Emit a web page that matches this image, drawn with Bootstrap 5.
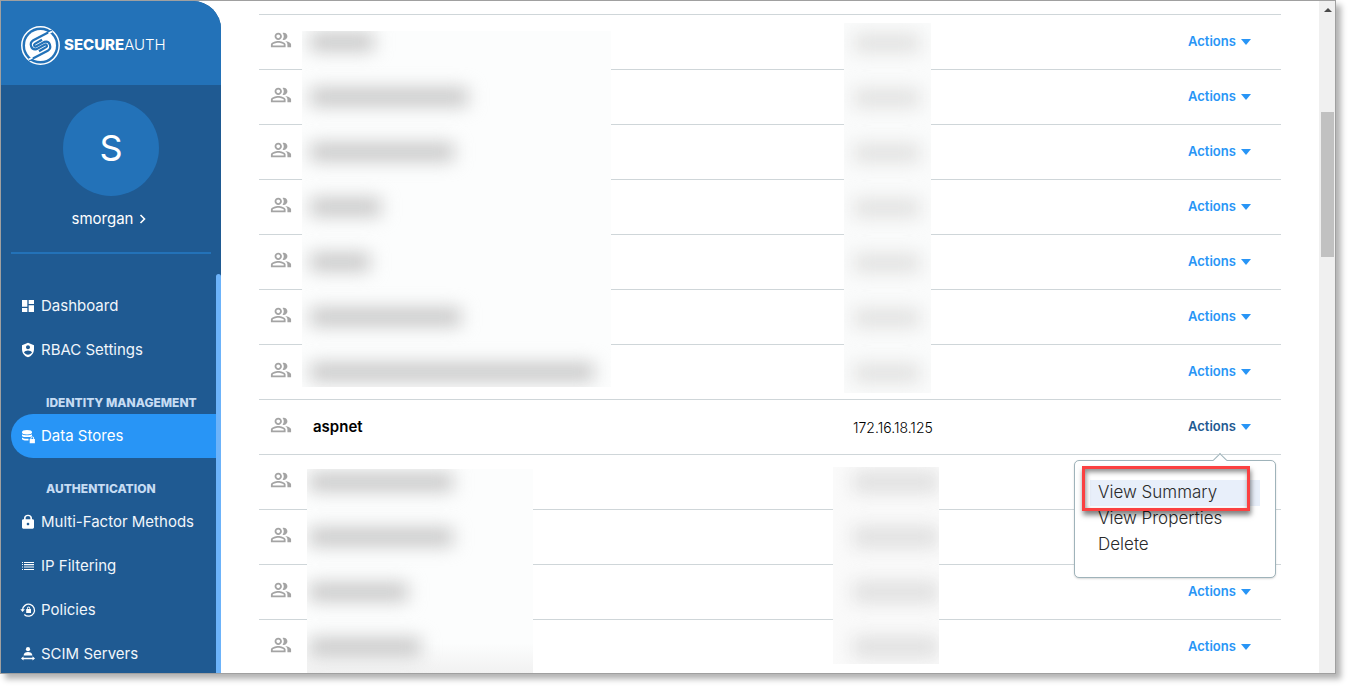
<!DOCTYPE html>
<html lang="en">
<head>
<meta charset="utf-8">
<meta name="viewport" content="width=device-width, initial-scale=1">
<title>SecureAuth - Data Stores</title>
<link href="https://cdn.jsdelivr.net/npm/bootstrap@5.3.0/dist/css/bootstrap.min.css" rel="stylesheet">
<style>
  :root {
    --sa-brand: #2372b8;
    --sa-deep: #1f5a92;
    --sa-bright: #2895f6;
    --sa-line: #cfd6d9;
  }
  body {
    font-family: Inter, "Open Sans", sans-serif;
    background: #fff;
    color: #000;
    padding: 0 15px 15px 0;
    overflow: hidden;
  }
  a { text-decoration: none; }
  .app-window {
    height: calc(100vh - 15px);
    border: 1px solid #a0a0a0;
    box-shadow: 5px 5px 6px rgba(0, 0, 0, .3);
    background: #fff;
  }

  /* Sidebar */
  .side { width: 220px; background: var(--sa-deep); border-top-right-radius: 28px; overflow: hidden; }
  .side-brand { height: 84px; padding: 4px 0 0 20px; gap: 4px; background: var(--sa-brand); }
  .wordmark { font-size: 15px; line-height: 20px; color: #fff; }
  .wordmark b { font-weight: 800; }
  .wordmark span { font-weight: 300; }
  .avatar { width: 96px; height: 96px; margin-top: 15px; background: var(--sa-brand); color: #fff; font-size: 36px; }
  .user-link { font-size: 15px; line-height: 20px; margin-top: 13px; padding-right: 4px; gap: 6px; color: #fff; }
  .side-rule { height: 2px; margin: 23px 10px 20px; background: var(--sa-brand); }
  .side-scroll { width: 5px; background: #6cb3fa; border-radius: 3px 3px 0 0; }
  .side-menu { padding: 10px 0 0 10px; }
  .side-link { height: 44px; padding-left: 9px; gap: 5px; font-size: 15px; color: #f1f6fb; border-radius: 22px 0 0 22px; }
  .side-link svg { width: 16px; height: 16px; fill: #fff; flex: none; }
  .side-link.active { background: var(--sa-bright); color: #fff; }
  .side-head { height: 42px; padding: 19px 0 0 35px; margin: 0; font-size: 12px; line-height: 24px; font-weight: 800; color: #c6dcf3; white-space: nowrap; }

  /* Data store list */
  .list-area { padding: 13px 38px 0; overflow: hidden; }
  .stores { table-layout: fixed; width: 100%; margin: 0; }
  .stores td { height: 55px; padding: 0; border-top: 1px solid var(--sa-line); vertical-align: middle; }
  .stores .c-icon { width: 54px; }
  .stores .c-addr { width: 335px; }
  .stores .c-act { width: 93px; }
  .stores svg { display: block; width: 22px; height: 22px; margin: 0 0 4px 11px; fill: #a4a4a4; }
  .store-name { font-size: 15px; font-weight: 600; }
  .store-addr { font-size: 14px; font-weight: 300; }
  .act-btn { font-size: 13px; line-height: 20px; font-weight: 600; padding: 0 0 2px; border: 0; color: var(--sa-bright); gap: 5px; background: none; display: flex; align-items: center; }
  .act-btn::after { margin: 1px 0 0; border-top: 6px solid var(--sa-bright); border-left: 5px solid transparent; border-right: 5px solid transparent; }
  .act-btn.show { color: var(--sa-deep) !important; }

  /* Open row menu */
  .row-menu { top: 60px; right: 5px; width: 202px; padding: 19px 15px; border: 1px solid #9fb3ba; border-radius: 5px; box-shadow: 0 1px 2px rgba(0, 0, 0, .15); z-index: 5; }
  .row-menu::before { content: ""; position: absolute; top: -6px; left: 140px; width: 10px; height: 10px; background: #fff; border: solid #9fb3ba; border-width: 1px 0 0 1px; transform: rotate(45deg); }
  .row-menu .dropdown-item { height: 26px; padding: 0 8px; font-size: 17px; line-height: 24px; font-weight: 300; color: #2a2a2a; }
  .row-menu .dropdown-item.current { background: #e8effa; }
  .callout { position: absolute; top: 5px; left: 7px; width: 168px; height: 45px; border: 3px solid #fb4141; box-shadow: 1px 4px 5px rgba(0, 0, 0, .5), inset 1px 3px 5px rgba(0, 0, 0, .45); pointer-events: none; }

  /* Redacted columns */
  .redact { position: absolute; overflow: hidden; background: #fcfdfd; }
  .redact div { height: 55px; display: flex; align-items: center; }
  .redact i { display: block; height: 18px; background: #c6c6c6; filter: blur(9px); }
  .redact-name-a { top: 30px; left: 81px; width: 309px; height: 356px; padding-left: 8px; }
  .redact-name-a div:first-child { margin-top: -17px; }
  .redact-name-b { top: 468px; bottom: -1px; left: 86px; width: 226px; padding-left: 2px; background: linear-gradient(#fcfdfd 85%, #f1f1f1); }
  .redact-name-b div:first-child { margin-top: -15px; }
  .redact-addr-a { top: 22px; right: 388px; width: 87px; height: 370px; padding-left: 10px; background: #fafbfb; }
  .redact-addr-a div:first-child { margin-top: -8px; }
  .redact-addr-b { top: 466px; right: 380px; width: 106px; height: 197px; padding-left: 20px; background: #fafafa; }
  .redact-addr-b div:first-child { margin-top: -13px; }
  .redact-addr-a i { width: 66px; background: #e0e0df; }
  .redact-addr-b i { width: 88px; height: 22px; background: #e0e0e0; }

  /* Page scroll bar */
  .page-scroll { width: 16px; background: #f0f0f0; padding: 7px 1px 0 2px; }
  .page-scroll .arrow { width: 8px; height: 4px; margin-left: 3px; background: #4a4a4a; clip-path: polygon(50% 0, 100% 100%, 0 100%); }
  .page-scroll .thumb { height: 145px; margin-top: 100px; background: #c1c1c1; }
</style>
</head>
<body>
<svg class="d-none" aria-hidden="true">
  <symbol id="group" viewBox="0 0 24 24">
    <path d="M16.67 13.13C18.04 14.06 19 15.32 19 17v3h4v-3c0-2.18-3.57-3.47-6.33-3.87zM15 12c2.21 0 4-1.79 4-4s-1.79-4-4-4c-.47 0-.91.1-1.33.24C14.5 5.27 15 6.58 15 8s-.5 2.73-1.33 3.76c.42.14.86.24 1.33.24zM9 12c2.21 0 4-1.79 4-4s-1.79-4-4-4-4 1.79-4 4 1.79 4 4 4zm0-6c1.1 0 2 .9 2 2s-.9 2-2 2-2-.9-2-2 .9-2 2-2zm0 7c-2.67 0-8 1.34-8 4v3h16v-3c0-2.66-5.33-4-8-4zm6 5H3v-.99C3.2 16.29 6.3 15 9 15s5.8 1.29 6 2v1z"/>
  </symbol>
</svg>

<div class="app-window d-flex">
  <aside class="side d-flex flex-column flex-shrink-0">
    <div class="side-brand d-flex align-items-center flex-shrink-0">
      <svg width="39" height="39" viewBox="0 0 39 39" fill="none" aria-hidden="true">
        <circle cx="19.500" cy="19.500" r="18.700" stroke="#fff" stroke-width="1.500"/>
        <circle cx="19.500" cy="19.500" r="15.500" fill="#fff"/>
        <g stroke="#2372b8" stroke-width="2.200">
          <path d="M31 4.500 12.300 14.200c-4.500 2.800-2.600 10.200 3.200 8.900L24 18.600c2-.6 2.600 1.600 1.200 2.500L18 25.200"/>
          <path d="M8 34.500 26.700 24.800c4.500-2.800 2.600-10.200-3.200-8.900L15 20.400c-2 .6-2.600-1.600-1.200-2.500L21 13.800"/>
        </g>
        <path d="m27.500 7.500 3.500-2M11.500 31.500l-3.500 2" stroke="#fff" stroke-width="2"/>
      </svg>
      <div class="wordmark"><b>SECURE</b><span>AUTH</span></div>
    </div>

    <div class="d-flex flex-column align-items-center flex-shrink-0">
      <div class="avatar rounded-circle d-flex align-items-center justify-content-center">S</div>
      <a href="#" class="user-link d-flex align-items-center">smorgan
        <svg width="7" height="10" viewBox="0 0 7 10" fill="none" stroke="#fff" stroke-width="1.600" aria-hidden="true"><path d="m1.500 1 4 4-4 4"/></svg>
      </a>
    </div>
    <div class="side-rule flex-shrink-0"></div>

    <div class="d-flex flex-grow-1 overflow-hidden">
      <nav class="side-menu flex-grow-1">
        <a href="#" class="side-link d-flex align-items-center">
          <svg viewBox="0 0 24 24" aria-hidden="true"><path d="M3 13h8V3H3v10zm0 8h8v-6H3v6zm10 0h8V11h-8v10zm0-18v6h8V3h-8z"/></svg>Dashboard</a>
        <a href="#" class="side-link d-flex align-items-center">
          <svg viewBox="0 0 24 24" aria-hidden="true"><path d="M12 1 3 5v6c0 5.550 3.840 10.740 9 12 5.160-1.260 9-6.450 9-12V5l-9-4zm0 4c1.660 0 3 1.340 3 3s-1.340 3-3 3-3-1.340-3-3 1.340-3 3-3zm0 14c-2.500 0-4.700-1.300-6-3.200.03-2 4-3.100 6-3.100s5.970 1.100 6 3.100c-1.300 1.900-3.500 3.200-6 3.200z"/></svg>RBAC Settings</a>
        <h2 class="side-head">IDENTITY MANAGEMENT</h2>
        <a href="#" class="side-link active d-flex align-items-center" aria-current="page">
          <svg viewBox="0 0 16 16" aria-hidden="true"><ellipse cx="7" cy="4.200" rx="5" ry="2.200"/><path d="M2 6.200c1.500 1.300 8.500 1.300 10 0v1.700c-1 1.600-9 1.600-10 0zM2 9.600c1.200 1.200 4 1.400 6.500 1.100v1.700c-3 .4-5.500 0-6.500-1.100zM10.500 11v-.8a1.800 1.800 0 0 1 3.600 0v.8h.8v4.300H9.700V11zm.9 0h1.800v-.8a.9.900 0 0 0-1.800 0z"/></svg>Data Stores</a>
        <h2 class="side-head">AUTHENTICATION</h2>
        <a href="#" class="side-link d-flex align-items-center">
          <svg viewBox="0 0 24 24" aria-hidden="true"><path d="M19 8h-1V6c0-2.760-2.240-5-6-5S6 3.240 6 6v2H5c-1.100 0-2 .9-2 2v10c0 1.100.9 2 2 2h14c1.100 0 2-.9 2-2V10c0-1.100-.9-2-2-2zm-7 9c-1.100 0-2-.9-2-2s.9-2 2-2 2 .9 2 2-.9 2-2 2zm3.500-9h-7V6c0-1.710 1.390-3 3.500-3s3.500 1.290 3.500 3v2z"/></svg>Multi-Factor Methods</a>
        <a href="#" class="side-link d-flex align-items-center">
          <svg viewBox="0 0 16 16" aria-hidden="true"><path d="M2 4h1v1H2zm2 0h10v1H4zM2 6h1v1H2zm2 0h10v1.300H4zM2 8.500h1v1H2zm2 0h10v1H4zM2 11h1v1H2zm2 0h10v1H4z"/></svg>IP Filtering</a>
        <a href="#" class="side-link d-flex align-items-center">
          <svg viewBox="0 0 16 16" aria-hidden="true"><path d="M2.500 8a6 6 0 1 1 1.800 4.500" fill="none" stroke="#fff" stroke-width="1.300"/><path d="M.3 7.200h4.600L2.600 10zM7 7V6.200a1.600 1.600 0 0 1 3.200 0V7h.8v4H6.200V7zm.8 0h1.600v-.8a.8.8 0 0 0-1.600 0z"/></svg>Policies</a>
        <a href="#" class="side-link d-flex align-items-center">
          <svg viewBox="0 0 16 16" aria-hidden="true"><circle cx="8" cy="3.200" r="2.100"/><path d="M3.600 9.500c0-4.600 8.800-4.600 8.800 0zM1 12.400l2.500-2.100v1.400h9v-1.400l2.500 2.100-2.500 2.100v-1.300h-9v1.300z"/></svg>SCIM Servers</a>
      </nav>
      <div class="side-scroll"></div>
    </div>
  </aside>

  <main class="list-area flex-grow-1 position-relative">
    <table class="stores">
      <colgroup><col class="c-icon"><col><col class="c-addr"><col class="c-act"></colgroup>
      <tbody>
        <tr><td><svg><use href="#group"/></svg></td><td></td><td></td><td><button type="button" class="act-btn dropdown-toggle">Actions</button></td></tr>
        <tr><td><svg><use href="#group"/></svg></td><td></td><td></td><td><button type="button" class="act-btn dropdown-toggle">Actions</button></td></tr>
        <tr><td><svg><use href="#group"/></svg></td><td></td><td></td><td><button type="button" class="act-btn dropdown-toggle">Actions</button></td></tr>
        <tr><td><svg><use href="#group"/></svg></td><td></td><td></td><td><button type="button" class="act-btn dropdown-toggle">Actions</button></td></tr>
        <tr><td><svg><use href="#group"/></svg></td><td></td><td></td><td><button type="button" class="act-btn dropdown-toggle">Actions</button></td></tr>
        <tr><td><svg><use href="#group"/></svg></td><td></td><td></td><td><button type="button" class="act-btn dropdown-toggle">Actions</button></td></tr>
        <tr><td><svg><use href="#group"/></svg></td><td></td><td></td><td><button type="button" class="act-btn dropdown-toggle">Actions</button></td></tr>
        <tr>
          <td><svg><use href="#group"/></svg></td>
          <td class="store-name">aspnet</td>
          <td class="store-addr">172.16.18.125</td>
          <td class="position-relative">
            <button type="button" class="act-btn dropdown-toggle show" aria-expanded="true">Actions</button>
            <div class="dropdown-menu row-menu show">
              <a href="#" class="dropdown-item current">View Summary</a>
              <a href="#" class="dropdown-item">View Properties</a>
              <a href="#" class="dropdown-item">Delete</a>
              <span class="callout"></span>
            </div>
          </td>
        </tr>
        <tr><td><svg><use href="#group"/></svg></td><td></td><td></td><td></td></tr>
        <tr><td><svg><use href="#group"/></svg></td><td></td><td></td><td></td></tr>
        <tr><td><svg><use href="#group"/></svg></td><td></td><td></td><td><button type="button" class="act-btn dropdown-toggle">Actions</button></td></tr>
        <tr><td><svg><use href="#group"/></svg></td><td></td><td></td><td><button type="button" class="act-btn dropdown-toggle">Actions</button></td></tr>
      </tbody>
    </table>

    <div class="redact redact-name-a" aria-hidden="true">
      <div><i style="width:64px"></i></div>
      <div><i style="width:158px"></i></div>
      <div><i style="width:144px"></i></div>
      <div><i style="width:71px"></i></div>
      <div><i style="width:60px"></i></div>
      <div><i style="width:151px"></i></div>
      <div><i style="width:284px"></i></div>
    </div>
    <div class="redact redact-name-b" aria-hidden="true">
      <div><i style="width:144px"></i></div>
      <div><i style="width:144px"></i></div>
      <div><i style="width:99px"></i></div>
      <div><i style="width:112px"></i></div>
    </div>
    <div class="redact redact-addr-a" aria-hidden="true">
      <div><i></i></div><div><i></i></div><div><i></i></div><div><i></i></div><div><i></i></div><div><i></i></div><div><i></i></div>
    </div>
    <div class="redact redact-addr-b" aria-hidden="true">
      <div><i></i></div><div><i></i></div><div><i></i></div><div><i></i></div>
    </div>
  </main>

  <div class="page-scroll flex-shrink-0" aria-hidden="true">
    <div class="arrow"></div>
    <div class="thumb"></div>
  </div>
</div>
<script src="https://cdn.jsdelivr.net/npm/bootstrap@5.3.0/dist/js/bootstrap.bundle.min.js"></script>
</body>
</html>
